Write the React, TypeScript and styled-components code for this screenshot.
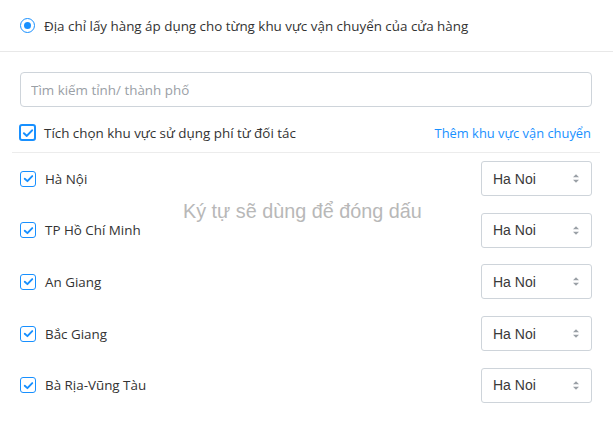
import { FC } from 'react'
import styled, { createGlobalStyle } from 'styled-components'

const GlobalStyle = createGlobalStyle`
  body {
    margin: 0;
    background: #fff;
    font-family: 'Open Sans', 'Noto Sans', sans-serif;
    color: #333;
  }
`

const Page = styled.div`
  position: relative;
  width: 613px;
  height: 425px;
  overflow: hidden;
`

const Header = styled.div`
  display: flex;
  align-items: center;
  gap: 9px;
  height: 51px;
  padding: 0 20px;
  border-bottom: 1px solid #e8e8e8;
  font-size: 13.4px;
`

const Radio = styled.span`
  width: 15px;
  height: 15px;
  box-sizing: border-box;
  border: 1.5px solid #1890ff;
  border-radius: 50%;
  display: flex;
  align-items: center;
  justify-content: center;
  &::after {
    content: '';
    width: 7px;
    height: 7px;
    border-radius: 50%;
    background: #1890ff;
  }
`

const Body = styled.div`
  padding: 20px 12px 0;
`

const SearchInput = styled.input`
  display: block;
  box-sizing: border-box;
  width: calc(100% - 17px);
  margin: 0 8px;
  height: 35px;
  padding: 0 10px;
  border: 1px solid #ced4da;
  border-radius: 4px;
  font-family: 'Open Sans', sans-serif;
  font-size: 13.4px;
  color: #333;
  outline: none;
  &::placeholder {
    color: #9aa0a6;
  }
`

const OptionBar = styled.div`
  display: flex;
  align-items: center;
  justify-content: space-between;
  box-sizing: border-box;
  height: 46px;
  padding: 6px 9px 0 7px;
  border-bottom: 1px solid #ececec;
  margin-right: 1px;
`

const CheckLabel = styled.label<{ $gap?: number }>`
  display: flex;
  align-items: center;
  gap: ${p => p.$gap ?? 9}px;
  font-size: 13.4px;
  color: #333;
`

const Box = styled.span<{ $size: number; $border: number }>`
  width: ${p => p.$size}px;
  height: ${p => p.$size}px;
  box-sizing: border-box;
  border: ${p => p.$border}px solid #1890ff;
  border-radius: 3px;
  display: flex;
  align-items: center;
  justify-content: center;
  background: #fff;
`

const LinkText = styled.a`
  color: #1890ff;
  font-size: 12.9px;
  text-decoration: none;
  cursor: pointer;
`

const Row = styled.div`
  display: flex;
  align-items: center;
  justify-content: space-between;
  height: 51.6px;
  padding: 0 9px 0 8px;
`

const SelectBox = styled.div`
  display: flex;
  align-items: center;
  justify-content: space-between;
  box-sizing: border-box;
  width: 111px;
  height: 35px;
  padding: 0 11px 0 11px;
  border: 1px solid #ced4da;
  border-radius: 3px;
  font-family: 'Liberation Sans', Arial, sans-serif;
  font-size: 14px;
  color: #3a3a3a;
`

const Watermark = styled.div`
  position: absolute;
  left: 183px;
  top: 200px;
  font-family: 'Liberation Sans', Arial, sans-serif;
  font-size: 19.8px;
  color: #b8b8b8;
  pointer-events: none;
`

const Check: FC<{ size: number; border: number }> = ({ size, border }) => (
  <Box $size={size} $border={border}>
    <svg width={size - 5} height={size - 5} viewBox="0 0 10 10">
      <path d="M1.6 5.2 L4 7.4 L8.4 2.8" fill="none" stroke="#1890ff" strokeWidth="1.7" strokeLinecap="round" strokeLinejoin="round" />
    </svg>
  </Box>
)

const Caret = () => (
  <svg width="8" height="11" viewBox="0 0 8 11">
    <path d="M1 4.2 L4 1.2 L7 4.2 Z" fill="#9aa0a6" />
    <path d="M1 6.8 L4 9.8 L7 6.8 Z" fill="#9aa0a6" />
  </svg>
)

const provinces = ['Hà Nội', 'TP Hồ Chí Minh', 'An Giang', 'Bắc Giang', 'Bà Rịa-Vũng Tàu']

const App: FC = () => {
  return (
    <Page>
      <GlobalStyle />
      <Header>
        <Radio />
        <span>Địa chỉ lấy hàng áp dụng cho từng khu vực vận chuyển của cửa hàng</span>
      </Header>
      <Body>
        <SearchInput placeholder="Tìm kiếm tỉnh/ thành phố" />
        <OptionBar>
          <CheckLabel $gap={8}>
            <Check size={17} border={2} />
            Tích chọn khu vực sử dụng phí từ đối tác
          </CheckLabel>
          <LinkText>Thêm khu vực vận chuyển</LinkText>
        </OptionBar>
        {provinces.map(name => (
          <Row key={name}>
            <CheckLabel>
              <Check size={16} border={1.5} />
              {name}
            </CheckLabel>
            <SelectBox>
              Ha Noi
              <Caret />
            </SelectBox>
          </Row>
        ))}
      </Body>
      <Watermark>Ký tự sẽ dùng để đóng dấu</Watermark>
    </Page>
  )
}

export default App
